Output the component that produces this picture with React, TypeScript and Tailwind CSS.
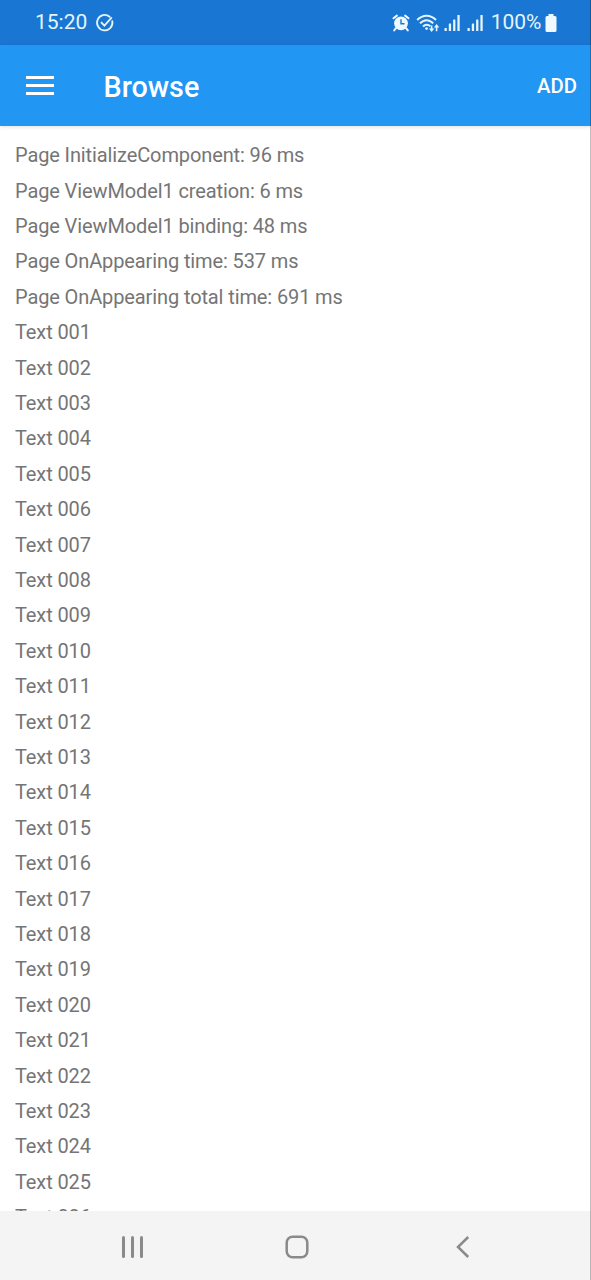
const timings = [
  "Page InitializeComponent: 96 ms",
  "Page ViewModel1 creation: 6 ms",
  "Page ViewModel1 binding: 48 ms",
  "Page OnAppearing time: 537 ms",
  "Page OnAppearing total time: 691 ms",
];

const rows = [
  ...timings,
  ...Array.from({ length: 26 }, (_, i) => `Text ${String(i + 1).padStart(3, "0")}`),
];

function CheckIcon() {
  return (
    <svg className="ml-[8px] h-5 w-5" viewBox="0 0 20 20" fill="none" stroke="#e4f5fc" strokeWidth="1.8">
      <path d="M14.6 3.7A7.7 7.7 0 1 0 17.3 8.2" strokeLinecap="round" />
      <path d="M6 9.1l3.4 3.6 7.4-8.3" />
    </svg>
  );
}

function AlarmIcon() {
  return (
    <svg className="h-5 w-[18px]" viewBox="0 0 18 20">
      <circle cx="9" cy="10.3" r="6.9" fill="#eefaff" />
      <path d="M1.500 5.300L4.900 2.600M16.500 5.300l-3.400-2.700M3.900 15.200l-1.700 2.200M14.100 15.200l1.700 2.200" stroke="#eefaff" strokeWidth="2" strokeLinecap="round" />
      <path d="M9 6.200v4.500h3.500" stroke="#1976d2" strokeWidth="1.400" fill="none" />
    </svg>
  );
}

function WifiIcon() {
  return (
    <svg className="ml-[6px] h-5 w-[24px]" viewBox="0 0 24 20" fill="none" stroke="#e4f5fc">
      <path d="M1.200 7C6.800 1.200 14.400 1.200 20 7M4 10.400c4-4.300 9.200-4.300 13.200 0M7 13.500c2.200-2.400 5.200-2.400 7.300-.3" strokeWidth="2" />
      <circle cx="10.600" cy="15.600" r="1.400" fill="#e4f5fc" stroke="none" />
      <path d="M15.600 12.500v4.500M20.600 18.200v-4.700" strokeWidth="1.600" />
      <path d="M12.900 15.400h5.400l-2.700 3.500zM17.900 14.600h5.400l-2.700-3.500z" fill="#e4f5fc" stroke="none" />
    </svg>
  );
}

function SignalIcon() {
  return (
    <svg className="h-[18px] w-[17px]" viewBox="0 0 17 18" fill="#e4f5fc">
      <rect x="0.500" y="14" width="2.300" height="3" rx=".5" />
      <rect x="4.800" y="9.500" width="2.300" height="7.500" rx=".5" />
      <rect x="9.100" y="5.500" width="2.300" height="11.500" rx=".5" />
      <rect x="13.400" y="1" width="2.300" height="16" rx=".5" />
    </svg>
  );
}

function BatteryIcon() {
  return (
    <svg className="ml-[3px] h-5 w-3" viewBox="0 0 12 20" fill="#eefaff">
      <path d="M3.500 1h5v2H10q1.500 0 1.500 1.500v13Q11.500 19 10 19H2Q.5 19 .5 17.500v-13Q.5 3 2 3h1.500z" />
    </svg>
  );
}

export default function App() {
  return (
    <div className="relative flex h-[1280px] w-[591px] flex-col overflow-hidden bg-white font-['Roboto',sans-serif]">
      <header className="flex h-[45px] shrink-0 items-center justify-between bg-[#1976d2] pl-[35px] pr-[34.500px] text-[#e4f5fc]">
        <div className="flex items-center">
          <span className="text-[21px] leading-none">15:20</span>
          <CheckIcon />
        </div>
        <div className="flex items-center">
          <AlarmIcon />
          <WifiIcon />
          <div className="ml-[4px] flex gap-[6px]">
            <SignalIcon />
            <SignalIcon />
          </div>
          <span className="ml-[7px] text-[21px] leading-none">100%</span>
          <BatteryIcon />
        </div>
      </header>

      <div className="z-10 flex h-[81px] shrink-0 items-center bg-[#2196f3] pl-[26px] pr-[14px] text-white shadow-[0_1px_4px_rgba(0,0,0,0.13)]">
        <button aria-label="Menu" className="flex w-7 flex-col gap-[5px]">
          <span className="h-[3px] bg-white" />
          <span className="h-[3px] bg-white" />
          <span className="h-[3px] bg-white" />
        </button>
        <h1 className="ml-[49.500px] pt-[4px] text-[28.750px] font-medium leading-none">Browse</h1>
        <button className="ml-auto pt-[2px] text-[20.300px] font-medium leading-none">ADD</button>
      </div>

      <main className="min-h-0 flex-1 overflow-hidden pl-[15px] pt-[12.100px] text-[20px] tracking-[-0.115px] text-[#757575]">
        {rows.map((row) => (
          <div key={row} className="h-[35.410px] whitespace-nowrap leading-[35.410px]">{row}</div>
        ))}
      </main>

      <nav className="grid h-[69px] shrink-0 grid-cols-[264px_66px_1fr] items-center bg-[#f4f4f4] text-[#8a8a8a]">
        <button aria-label="Recent apps" className="mt-[2px] flex h-[22px] justify-center gap-[6px]">
          <span className="h-[22px] w-[3px] rounded-sm bg-[#8a8a8a]" />
          <span className="h-[22px] w-[3px] rounded-sm bg-[#8a8a8a]" />
          <span className="h-[22px] w-[3px] rounded-sm bg-[#8a8a8a]" />
        </button>
        <button aria-label="Home" className="flex justify-center pt-[3px]">
          <svg className="h-6 w-6" viewBox="0 0 24 24" fill="none" stroke="currentColor" strokeWidth="2.500">
            <rect x="1.700" y="1.700" width="20.600" height="20.600" rx="6" />
          </svg>
        </button>
        <button aria-label="Back" className="flex pl-[125px] pt-[2px]">
          <svg className="h-6 w-4" viewBox="0 0 16 24" fill="none" stroke="currentColor" strokeWidth="2.500">
            <path d="M13.200 2L3 12l10.200 10" />
          </svg>
        </button>
      </nav>

      <div className="pointer-events-none absolute inset-y-0 right-0 z-20 w-px bg-black/25" />
    </div>
  );
}
